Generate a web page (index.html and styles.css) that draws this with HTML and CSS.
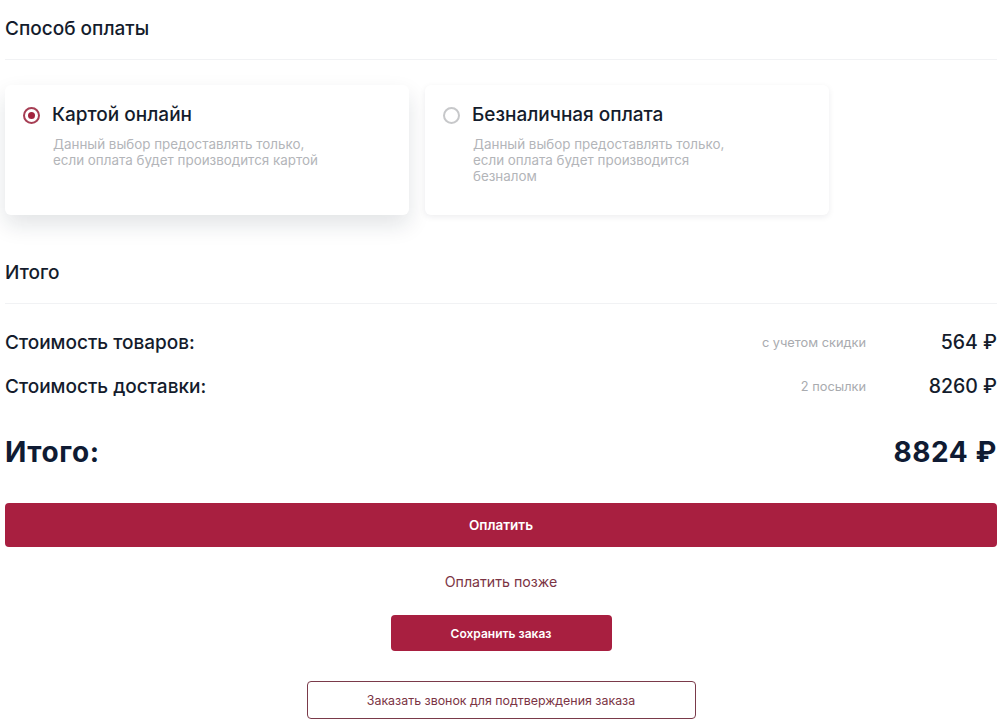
FILE: index.html
```html
<!DOCTYPE html>
<html lang="ru">
<head>
<meta charset="utf-8">
<link rel="stylesheet" href="styles.css">
</head>
<body>
<div class="page">
  <h2 class="section-title">Способ оплаты</h2>
  <div class="divider"></div>
  <div class="cards">
    <div class="card card-active">
      <div class="card-head">
        <span class="radio radio-on"></span>
        <span class="card-title">Картой онлайн</span>
      </div>
      <p class="card-desc">Данный выбор предоставлять только,<br>если оплата будет производится картой</p>
    </div>
    <div class="card">
      <div class="card-head">
        <span class="radio"></span>
        <span class="card-title">Безналичная оплата</span>
      </div>
      <p class="card-desc">Данный выбор предоставлять только,<br>если оплата будет производится<br>безналом</p>
    </div>
  </div>

  <h2 class="section-title total-title">Итого</h2>
  <div class="divider"></div>

  <div class="rows">
    <div class="row">
      <span class="row-label">Стоимость товаров:</span>
      <span class="row-note">с учетом скидки</span>
      <span class="row-value">564 ₽</span>
    </div>
    <div class="row">
      <span class="row-label">Стоимость доставки:</span>
      <span class="row-note">2 посылки</span>
      <span class="row-value">8260 ₽</span>
    </div>
    <div class="row row-total">
      <span class="row-label">Итого:</span>
      <span class="row-value">8824 ₽</span>
    </div>
  </div>

  <div class="actions">
    <button class="btn btn-pay">Оплатить</button>
    <a class="link-later">Оплатить позже</a>
    <button class="btn btn-save">Сохранить заказ</button>
    <button class="btn btn-outline">Заказать звонок для подтверждения заказа</button>
  </div>
</div>
</body>
</html>
```

FILE: styles.css
```css
* { box-sizing: border-box; }
html, body { margin: 0; padding: 0; background: #fff; }
body {
  font-family: Inter, "Noto Sans", sans-serif;
  color: #141c2c;
}
.page {
  width: 992px;
  margin-left: 5px;
  padding-top: 17px;
}
.section-title {
  margin: 0;
  font-size: 19px;
  font-weight: 500;
  line-height: 24px;
  color: #141c2c;
}
.divider {
  height: 1px;
  background: #f1f2f4;
  margin-top: 18px;
}
.cards {
  display: flex;
  gap: 16px;
  margin-top: 25px;
}
.card {
  width: 404px;
  height: 130px;
  background: #fff;
  border-radius: 6px;
  padding: 19px 19px 0 18px;
  box-shadow: 0 2px 6px rgba(20, 30, 50, 0.08);
}
.card-active {
  box-shadow: 0 10px 22px rgba(20, 30, 50, 0.12);
}
.card-head {
  display: flex;
  align-items: center;
  gap: 12px;
}
.radio {
  width: 17px;
  height: 17px;
  border-radius: 50%;
  border: 2px solid #c7c8ca;
  flex: none;
  display: flex;
  align-items: center;
  justify-content: center;
}
.radio-on { border-color: #a63e54; }
.radio-on::after {
  content: "";
  width: 7px;
  height: 7px;
  border-radius: 50%;
  background: #a3243f;
}
.card-title {
  font-size: 19px;
  font-weight: 500;
  line-height: 22px;
  color: #141c2c;
}
.card-desc {
  margin: 10px 0 0 30px;
  font-size: 13.4px;
  line-height: 16px;
  color: #b3b5b9;
}
.total-title { margin-top: 46px; }
.rows { margin-top: 26px; }
.row {
  display: flex;
  align-items: center;
  height: 24px;
  margin-bottom: 20px;
}
.row-label {
  flex: 1;
  font-size: 19px;
  font-weight: 500;
  color: #141c2c;
}
.row-note {
  font-size: 12.8px;
  color: #a9abaf;
  margin-right: 51px;
  white-space: nowrap;
}
.row-value {
  width: 80px;
  text-align: right;
  font-size: 19.5px;
  font-weight: 500;
  color: #141c2c;
  white-space: nowrap;
}
.row-total {
  margin-top: 37px;
  height: 34px;
  margin-bottom: 0;
}
.row-total .row-label,
.row-total .row-value {
  font-size: 28px;
  font-weight: 700;
  color: #0f1b33;
  letter-spacing: 0.6px;
}
.row-total .row-value { width: auto; }
.actions {
  display: flex;
  flex-direction: column;
  align-items: center;
  margin-top: 34px;
}
.btn {
  font-family: Inter, "Noto Sans", sans-serif;
  border: none;
  cursor: pointer;
}
.btn-pay {
  width: 992px;
  height: 44px;
  border-radius: 4px;
  background: #a81f40;
  color: #fff;
  font-size: 13.5px;
  font-weight: 600;
}
.link-later {
  margin-top: 26px;
  font-size: 14.2px;
  line-height: 17px;
  color: #7b3444;
}
.btn-save {
  margin-top: 25px;
  width: 221px;
  height: 36px;
  border-radius: 4px;
  background: #a81f40;
  color: #fff;
  font-size: 12px;
  font-weight: 600;
}
.btn-outline {
  margin-top: 30px;
  width: 389px;
  height: 38px;
  border-radius: 4px;
  background: #fff;
  border: 1px solid #7a3a4a;
  color: #7b3444;
  font-size: 12.4px;
}
```
